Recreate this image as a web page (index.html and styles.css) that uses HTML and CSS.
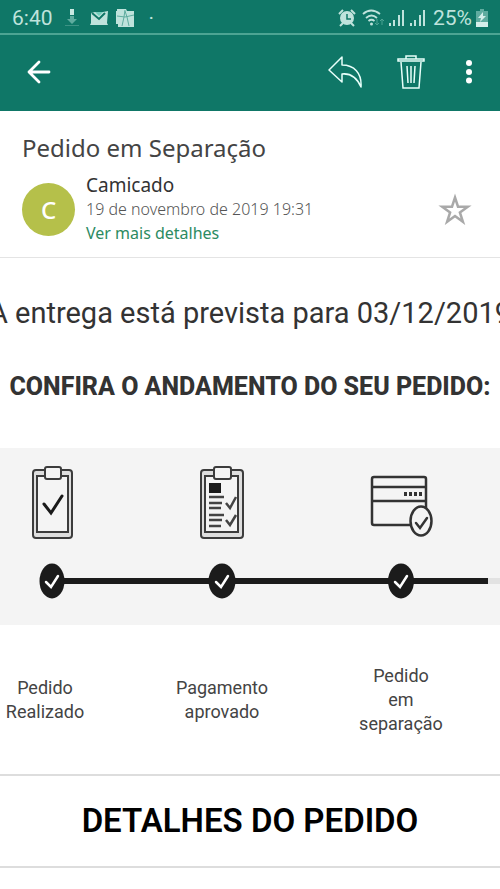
FILE: index.html
```html
<!DOCTYPE html>
<html lang="pt-BR">
<head>
<meta charset="utf-8">
<meta name="viewport" content="width=device-width, initial-scale=1">
<title>Pedido em Separação</title>
<link rel="stylesheet" href="styles.css">
</head>
<body>
<div class="status">
  <span class="clock">6:40</span>
  <svg class="icon-download" width="14" height="20" viewBox="0 0 14 20"><path fill="#c9e9e2" d="M5 1h4v6H5z"/><path fill="#5fac9f" d="M5 8h4v3h3l-5 5-5-5h3z"/><path fill="#3d9385" d="M0 17h14v1H0z"/></svg>
  <svg class="icon-mail" width="20" height="18" viewBox="0 0 20 18"><path fill="#bfe3dc" d="M2 4l4-1h8l5-1-1 12 1 2H1l1-2z"/><path fill="#72cdbc" d="M6 3h8l-4 4z"/><path fill="none" stroke="#0f7767" stroke-width="2" d="M3 4l7 6 6-6"/></svg>
  <svg class="icon-tiles" width="19" height="20" viewBox="0 0 19 20"><path fill="#bfe3dc" d="M1 1h9l1 2h7v16H2v-3H0V3h1z"/><path fill="none" stroke="#5fac9f" d="M9 2l-1 7-2 9M1 8l8 1 9-2M9 3l2 6 2 9"/></svg>
  <span class="dot">·</span>
  <div class="system">
    <svg width="18" height="18" viewBox="0 0 18 18"><path stroke="#bfe3dc" stroke-width="2" d="M1 5l4-4M17 5l-4-4M5 14l-3 3M13 14l3 3"/><circle cx="9" cy="9" r="7" fill="#bfe3dc"/><path fill="none" stroke="#0f7767" stroke-width="1.500" d="M9 5v5h4"/></svg>
    <svg class="wifi" width="22" height="18" viewBox="0 0 22 18"><g fill="none" stroke="#bfe3dc" stroke-width="1.800"><path d="M1 5q8-7 17 0M4 9q5.500-5 11 0M6.500 12q3-2.500 6 0"/></g><circle cx="9.500" cy="15" r="1.500" fill="#bfe3dc"/><path fill="none" stroke="#4da493" d="M15 10v6m-2-2l2 2 2-2M20 16v-6m-2 2l2-2 2 2"/></svg>
    <svg class="signal" width="16" height="18" viewBox="0 0 16 18"><path fill="#bfe3dc" d="M0 14h2v3H0zM4 11h2v6H4zM9 6h2v11H9zM13 1h2v16h-2z"/></svg>
    <svg class="signal" width="16" height="18" viewBox="0 0 16 18"><path fill="#bfe3dc" d="M0 14h2v3H0zM4 11h2v6H4zM9 6h2v11H9zM13 1h2v16h-2z"/></svg>
    <span class="battery">25%</span>
    <svg width="12" height="18" viewBox="0 0 12 18"><path fill="#5fac9f" d="M4 0h4v2h4v11H0V2h4z"/><path fill="#d5efea" d="M0 13h12v5H0zM7 3L2 9h3l-1 4 6-6H7z"/></svg>
  </div>
</div>
<header class="toolbar">
  <button class="tool back" aria-label="Voltar"><svg width="24" height="24" viewBox="0 0 24 24"><path fill="none" stroke="#fff" stroke-width="2.800" stroke-linecap="round" stroke-linejoin="round" d="M12 2L2 12l10 10M2 12h20"/></svg></button>
  <button class="tool reply" aria-label="Responder"><svg width="34" height="34" viewBox="0 0 34 34"><path fill="none" stroke="#e8fffa" stroke-width="1.500" stroke-linejoin="round" d="M14 2L1 15l13 12v-8c9-1 15 4 19 13 1-14-7-22-19-22z"/></svg></button>
  <button class="tool trash" aria-label="Excluir"><svg width="28" height="36" viewBox="0 0 28 36"><path fill="none" stroke="#e8fffa" stroke-width="1.500" d="M1 5h26v2H1zM9 5V2h10v3M4 8l2 26h16l2-26M10 12l1 17M14 12v17M18 12l-1 17"/></svg></button>
  <button class="tool more" aria-label="Mais opções"><svg width="6" height="24" viewBox="0 0 6 24"><g fill="#fff"><circle cx="3" cy="3" r="3"/><circle cx="3" cy="12" r="3"/><circle cx="3" cy="20.500" r="3"/></g></svg></button>
</header>
<section class="message">
  <h1 class="subject">Pedido em Separação</h1>
  <div class="sender">
    <div class="avatar">C</div>
    <div class="meta">
      <div class="name">Camicado</div>
      <time class="date">19 de novembro de 2019 19:31</time>
      <a class="more-link" href="#">Ver mais detalhes</a>
    </div>
    <button class="star" aria-label="Favoritar"><svg width="34" height="32" viewBox="0 0 34 32"><path fill="none" stroke="#a9a9a9" stroke-width="2.500" d="M17 4.500l3 9.200h9.800l-7.900 5.800 3 9.300-7.900-5.800-7.900 5.800 3-9.300-7.900-5.800H14z"/></svg></button>
  </div>
</section>
<main>
  <section class="intro">
    <p class="delivery">A entrega está prevista para 03/12/2019</p>
    <h2 class="follow">CONFIRA O ANDAMENTO DO SEU PEDIDO:</h2>
  </section>
  <section class="steps">
    <div class="step first">
      <svg class="pic" width="44" height="74" viewBox="0 0 44 74"><g fill="#f4f4f4" stroke="#3c3c3c" stroke-width="2"><rect x="3" y="4" width="39" height="68" rx="3" fill="#dedede"/><rect x="7" y="10" width="31" height="56"/><rect x="15" y="1" width="16" height="12" rx="2"/></g><path fill="none" stroke="#1a1a1a" stroke-width="3" stroke-linecap="round" d="M14 38l7 9 11-17"/></svg>
      <div class="track"><svg width="26" height="36" viewBox="0 0 26 36"><ellipse cx="13" cy="18" rx="12.500" ry="17.500" fill="#1b1b1b"/><path fill="none" stroke="#fff" stroke-width="2.500" stroke-linecap="round" d="M7 19l5 5 7-11"/></svg></div>
    </div>
    <div class="step">
      <svg class="pic" width="44" height="74" viewBox="0 0 44 74"><g fill="#f4f4f4" stroke="#3c3c3c" stroke-width="2"><rect x="1" y="4" width="42" height="68" rx="3" fill="#dedede"/><rect x="5" y="10" width="33" height="56"/><rect x="14" y="1" width="17" height="12" rx="2"/></g><path fill="#1a1a1a" d="M9 17h12v10H9z"/><path fill="none" stroke="#444" stroke-width="2.500" d="M9 31h15M9 37h13M9 42h12M9 49h15M9 54h13M9 60h12M26 37l4 5 6-11M26 54l4 5 6-10"/></svg>
      <div class="track"><svg width="28" height="36" viewBox="0 0 28 36"><ellipse cx="14" cy="18" rx="13.500" ry="17.500" fill="#1b1b1b"/><path fill="none" stroke="#fff" stroke-width="2.500" stroke-linecap="round" d="M8 19l5 5 7-11"/></svg></div>
    </div>
    <div class="step">
      <svg class="pic card" width="64" height="74" viewBox="0 0 64 74"><rect x="3" y="11" width="54" height="48" rx="2" fill="none" stroke="#333" stroke-width="2.500"/><path stroke="#333" stroke-width="2.500" d="M3 21h54M3 35h54"/><path stroke="#333" stroke-width="4" stroke-dasharray="3 2" d="M35 28h18"/><ellipse cx="52" cy="55" rx="10.500" ry="14.500" fill="#f4f4f4" stroke="#333" stroke-width="2.500"/><path fill="none" stroke="#333" stroke-width="2.500" stroke-linecap="round" d="M47 57l4 5 7-10"/></svg>
      <div class="track"><svg width="26" height="36" viewBox="0 0 26 36"><ellipse cx="13" cy="18" rx="13" ry="17.500" fill="#1b1b1b"/><path fill="none" stroke="#fff" stroke-width="2.500" stroke-linecap="round" d="M7 19l5 5 7-11"/></svg></div>
    </div>
    <div class="step next"><div class="track pending"></div></div>
  </section>
  <section class="labels">
    <p class="label">Pedido<br>Realizado</p>
    <p class="label">Pagamento<br>aprovado</p>
    <p class="label">Pedido<br>em<br>separação</p>
  </section>
  <h2 class="details">DETALHES DO PEDIDO</h2>
</main>
</body>
</html>
```
FILE: styles.css
```css
* { box-sizing: border-box; }
body { margin: 0; background: #fff; color: #333; font-family: Roboto, "Liberation Sans", sans-serif; overflow-x: hidden; }
h1, h2, p { margin: 0; font-weight: 400; }
button { border: 0; padding: 0; background: none; }
svg { display: block; flex: none; }

.status { display: flex; align-items: center; height: 35px; padding: 2px 12px 0; background: #0f7767; border-bottom: 2px solid #4da493; color: #bfe3dc; font-size: 21px; line-height: 24px; }
.icon-download { margin-left: 12px; }
.icon-mail { margin-left: 10px; }
.icon-tiles { margin-left: 7px; }
.dot { margin-left: 14px; }
.system { display: flex; align-items: center; margin-left: auto; }
.wifi { margin-left: 6px; }
.signal { margin-left: 5px; }
.battery { margin: 0 4px 0 7px; }

.toolbar { display: flex; align-items: center; height: 76px; padding: 0 28px 2px 27px; background: #0f7767; }
.reply { margin-left: auto; }
.trash { margin-left: 35px; }
.more { margin-left: 41px; }

.message { height: 147px; padding: 21px 28px 0 22px; border-bottom: 1px solid #e4e4e4; font-family: "Noto Sans", sans-serif; }
.subject { font-size: 24px; line-height: 32px; color: #444; }
.sender { display: flex; align-items: center; margin-top: 9px; }
.avatar { width: 53px; height: 53px; border-radius: 50%; background: #b5c04a; color: #fff; font-size: 24px; font-weight: 500; line-height: 53px; text-align: center; }
.meta { display: flex; flex-direction: column; margin-left: 11px; line-height: 24px; }
.name { font-size: 19px; }
.date { font-size: 16px; font-weight: 300; color: #555; }
.more-link { font-size: 16px; color: #2c8b62; text-decoration: none; }
.star { margin-left: auto; }

.intro { display: flex; flex-direction: column; align-items: center; height: 190px; padding-top: 37px; white-space: nowrap; }
.delivery { font-size: 29px; line-height: 36px; }
.follow { margin-top: 38px; font-size: 25px; line-height: 36px; font-weight: 800; }

.steps, .labels { display: grid; grid-template-columns: 130fr 184fr 174fr 12fr; }
.steps { padding: 18px 0 26px; background: #f4f4f4; }
.step { display: flex; flex-direction: column; justify-content: flex-end; }
.pic { margin: 0 auto 23px; }
.track { display: flex; justify-content: center; align-items: center; height: 36px; background: linear-gradient(#1b1b1b, #1b1b1b) right / 100% 6px no-repeat; }
.first .pic { margin-left: 30px; }
.first .track { justify-content: flex-start; padding-left: 39px; background-size: 60% 6px; }
.track.pending { background-image: linear-gradient(#e2e2e2, #e2e2e2); }

.labels { align-items: center; height: 149px; }
.label { font-size: 18px; line-height: 24px; text-align: center; color: #444; }
.label:first-child { padding-right: 40px; }

.details { border-top: 2px solid #ddd; border-bottom: 2px solid #ddd; font-size: 33px; line-height: 90px; font-weight: 600; text-align: center; color: #000; }
```
